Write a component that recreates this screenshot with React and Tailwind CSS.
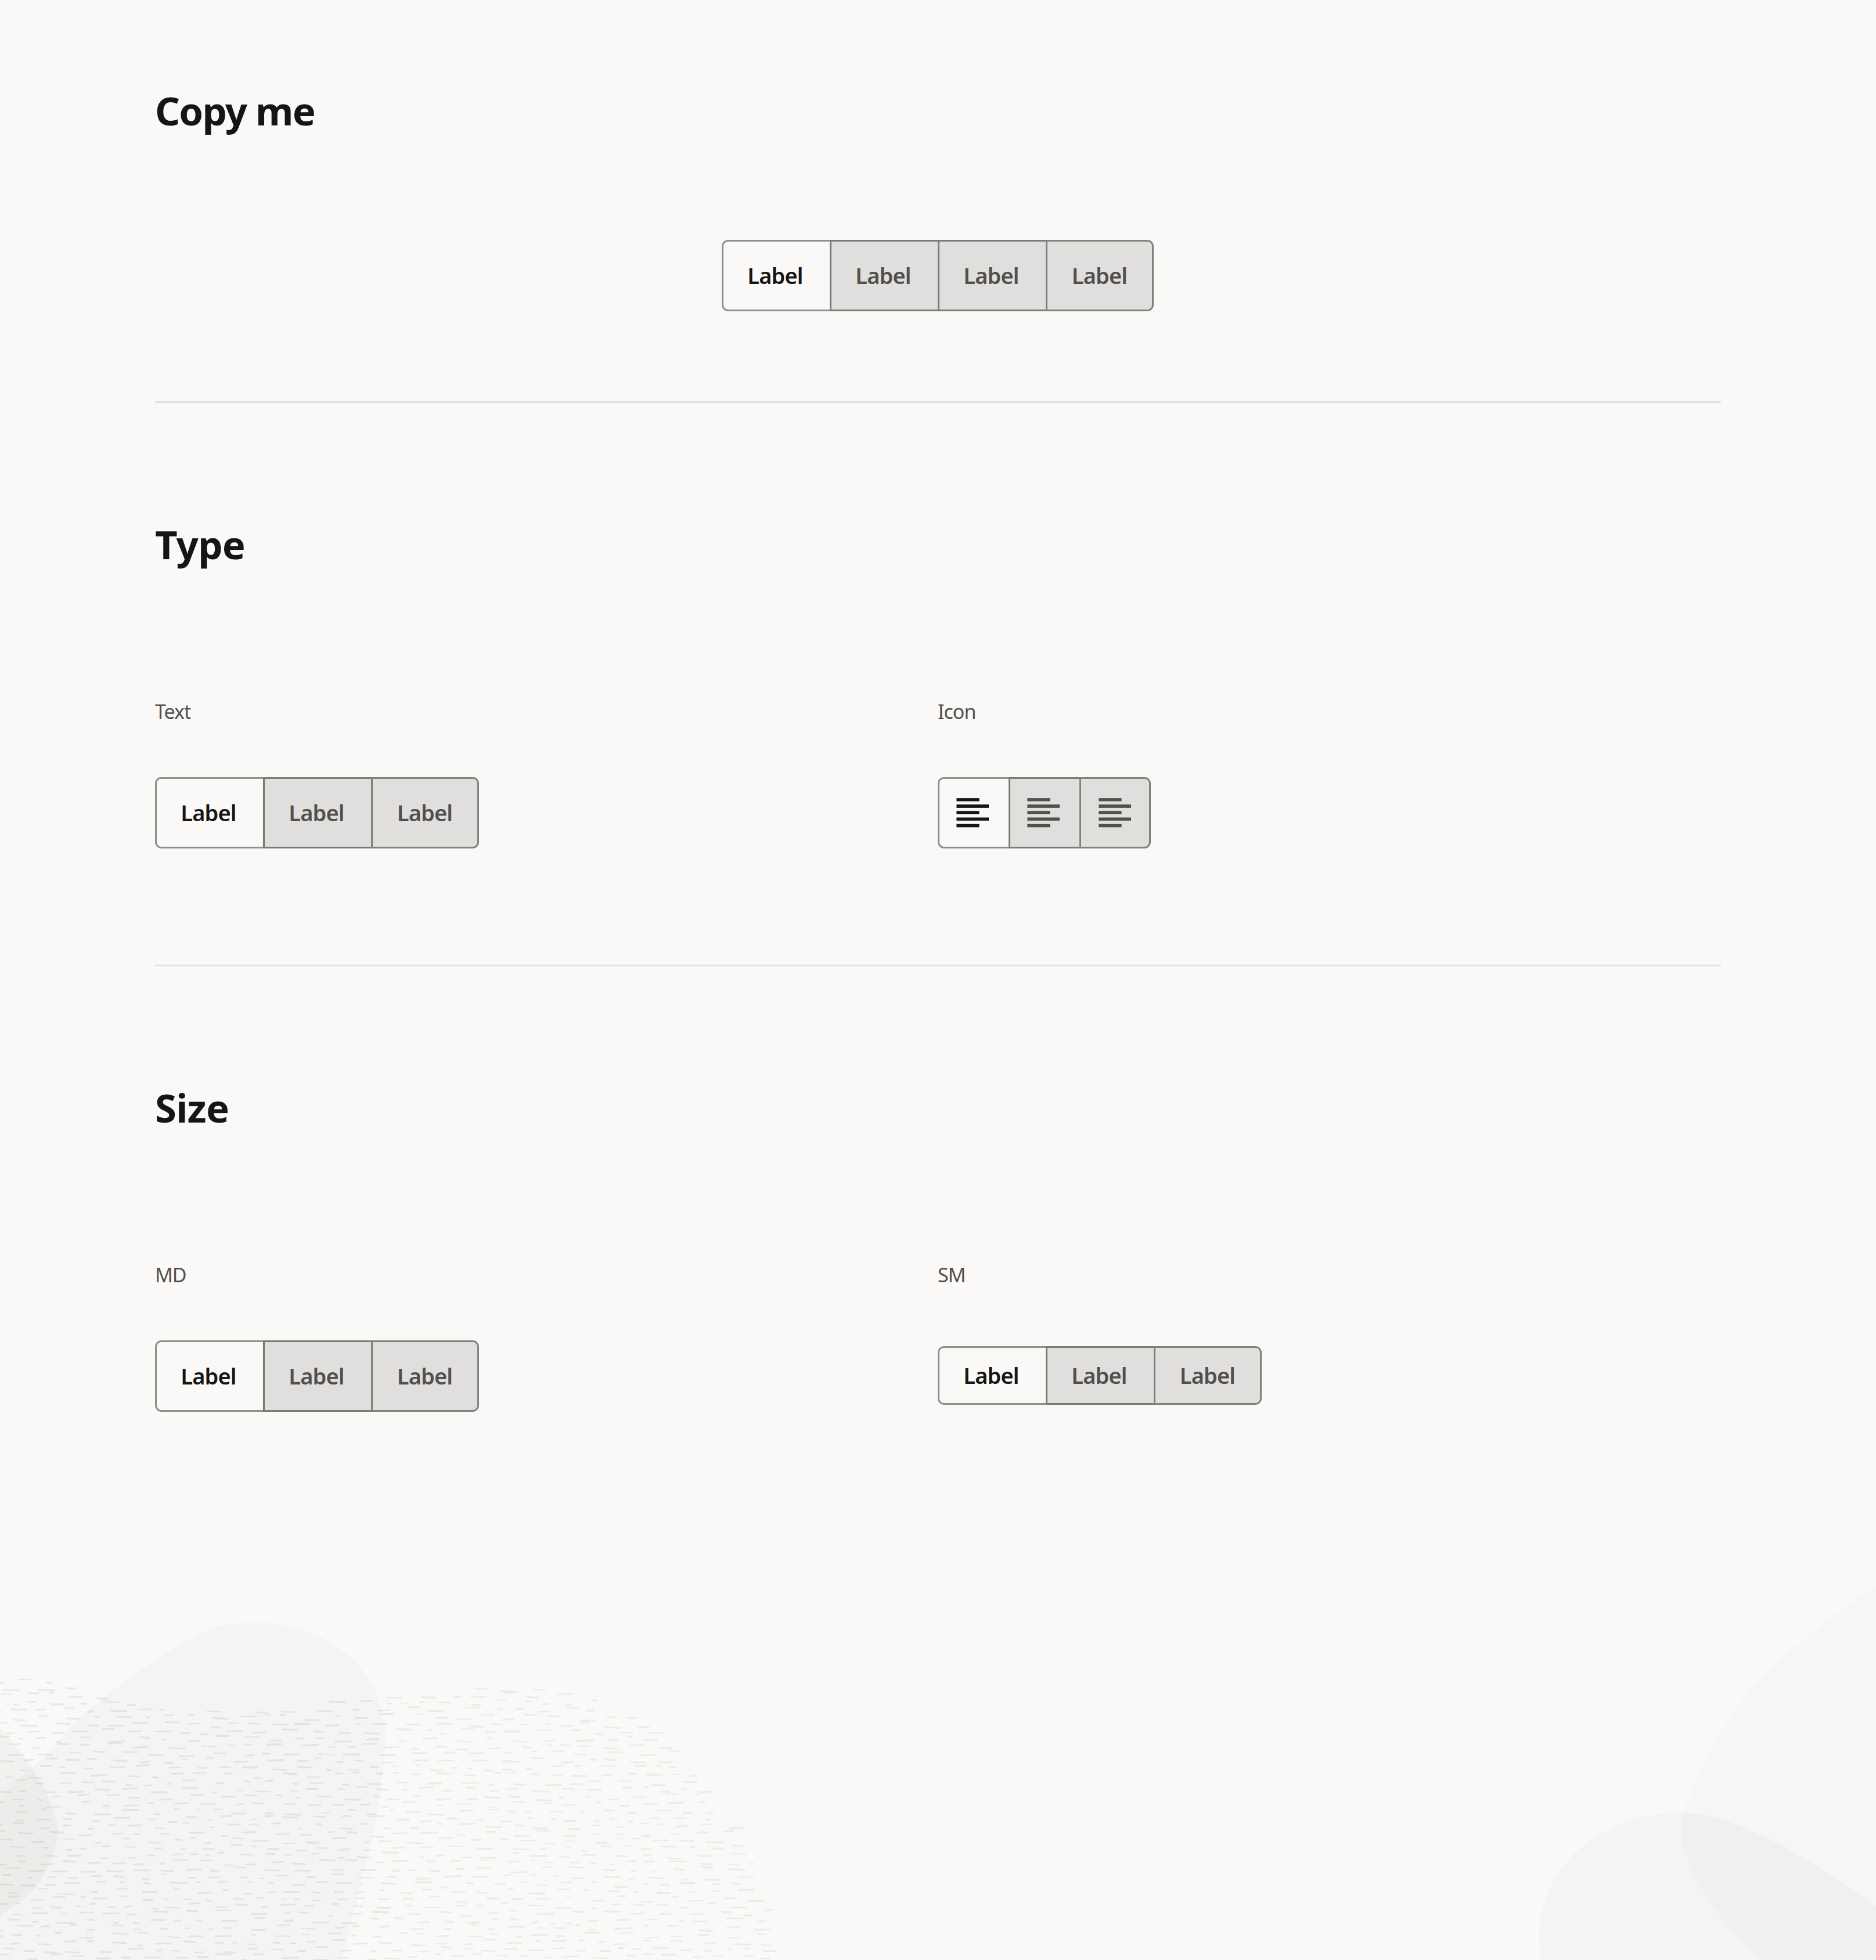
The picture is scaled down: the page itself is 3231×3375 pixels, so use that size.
import clsx from "clsx";

const W = 3231;
const H = 3375;

// closed curve through the given points, with straight runs outside the canvas
function smooth(points, tail) {
  let d = `M${points[0][0]} ${points[0][1]}`;
  for (let i = 0; i < points.length - 1; i++) {
    const p0 = points[i - 1] || points[i];
    const p1 = points[i];
    const p2 = points[i + 1];
    const p3 = points[i + 2] || p2;
    const c1 = [p1[0] + (p2[0] - p0[0]) / 6, p1[1] + (p2[1] - p0[1]) / 6];
    const c2 = [p2[0] - (p3[0] - p1[0]) / 6, p2[1] - (p3[1] - p1[1]) / 6];
    d += `C${c1[0]} ${c1[1]} ${c2[0]} ${c2[1]} ${p2[0]} ${p2[1]}`;
  }
  return `${d}${tail}Z`;
}

const leftPurple = smooth(
  [
    [-10, 3110], [26, 3070], [77, 3023], [128, 2967], [194, 2911], [286, 2846],
    [361, 2806], [433, 2794], [508, 2803], [577, 2833], [628, 2881],
    [656, 2940], [663, 3005], [648, 3130], [612, 3280], [587, 3385],
  ],
  "L-10 3385"
);
const leftGray = smooth(
  [
    [-10, 2965], [31, 3012], [61, 3053], [84, 3096], [98, 3139], [97, 3175],
    [82, 3217], [56, 3255], [26, 3281], [-10, 3305],
  ],
  ""
);
const rightPurple = smooth(
  [
    [2655, 3385], [2651, 3335], [2656, 3288], [2676, 3237], [2717, 3186],
    [2769, 3152], [2821, 3131], [2890, 3121], [2942, 3127], [2994, 3143],
    [3083, 3186], [3163, 3236], [3241, 3290],
  ],
  "L3241 3385"
);
const rightGray = smooth(
  [
    [3241, 2726], [3183, 2764], [3123, 2810], [3063, 2860], [3022, 2900],
    [2986, 2946], [2954, 3001], [2922, 3066], [2902, 3113], [2896, 3149],
    [2900, 3182], [2922, 3237], [2954, 3288], [2994, 3334], [3048, 3385],
  ],
  "L3241 3385"
);

// outline of the dashed hill, from left to right
const ridge = [
  [0, 2884], [76, 2890], [173, 2911], [240, 2935], [326, 2946], [459, 2944],
  [561, 2928], [638, 2920], [740, 2910], [825, 2904], [892, 2904], [986, 2915],
  [1030, 2926], [1093, 2957], [1146, 2992], [1204, 3053], [1236, 3090],
  [1276, 3155], [1307, 3218], [1325, 3291], [1336, 3375],
];

function ridgeAt(x) {
  for (let i = 1; i < ridge.length; i++) {
    const [x1, y1] = ridge[i - 1];
    const [x2, y2] = ridge[i];
    if (x <= x2) return y1 + ((y2 - y1) * (x - x1)) / (x2 - x1);
  }
  return H + 1;
}

function makeDashes() {
  let seed = 7;
  const rand = () => {
    seed = (seed * 16807) % 2147483647;
    return seed / 2147483647;
  };
  const dashes = [];
  for (let y = 2882; y < H + 6; y += 12.5) {
    let x = -30 + rand() * 30;
    while (x < 1340) {
      const len = 6 + rand() * 22;
      const dy = y + (rand() - 0.5) * 10;
      const tilt = (rand() - 0.45) * 2.4;
      if (dy > ridgeAt(Math.max(0, x + len / 2))) {
        dashes.push({
          d: `M${x.toFixed(1)} ${dy.toFixed(1)}q${(len / 2).toFixed(1)} ${(tilt * 0.8).toFixed(1)} ${len.toFixed(1)} ${tilt.toFixed(1)}`,
          w: 2 + rand() * 1.4,
          o: x < 660 ? 0.08 : 0.066,
        });
      }
      x += len + 14 + rand() * 24;
    }
  }
  return dashes;
}

const dashes = makeDashes();

function Backdrop() {
  return (
    <svg
      className="absolute inset-0 pointer-events-none"
      width={W}
      height={H}
      viewBox={`0 0 ${W} ${H}`}
      fill="none"
    >
      <defs>
        <clipPath id="left-blob">
          <path d={leftPurple} />
        </clipPath>
        <clipPath id="right-blob">
          <path d={rightPurple} />
        </clipPath>
      </defs>
      <path d={leftPurple} fill="#f5f3f4" />
      <path d={leftGray} fill="#f2f1ef" />
      <path d={leftGray} fill="#edecea" clipPath="url(#left-blob)" />
      <path d={rightPurple} fill="#f5f3f4" />
      <path d={rightGray} fill="#f7f6f4" />
      <path d={rightGray} fill="#f1f0ef" clipPath="url(#right-blob)" />
      {dashes.map((s, i) => (
        <path
          key={i}
          d={s.d}
          stroke="#2a2a12"
          strokeOpacity={s.o}
          strokeWidth={s.w}
          strokeLinecap="round"
        />
      ))}
    </svg>
  );
}

function AlignIcon() {
  return (
    <svg width="56" height="51" viewBox="0 0 56 51" fill="currentColor">
      <rect x="0.4" y="0.2" width="39.2" height="5.6" />
      <rect x="0.4" y="11.3" width="55.6" height="5.6" />
      <rect x="0.4" y="22.5" width="39.2" height="5.6" />
      <rect x="0.4" y="33.6" width="55.6" height="5.6" />
      <rect x="0.4" y="44.8" width="39.2" height="5.6" />
    </svg>
  );
}

function Segment({ position, icon }) {
  return (
    <button
      className={clsx(
        "flex h-full items-center justify-center text-[38px] font-semibold leading-none tracking-[-0.9px]",
        icon ? "w-[122px] last:w-[123px]" : "w-[186px] pb-0.5",
        position === "first" &&
          "rounded-l-[11px] border-y-[3px] border-l-[3px] border-[#908f8c] pr-[5px] text-[#161513]",
        position === "middle" &&
          "border-y-[3px] border-l-[3px] border-[#7b7a77] bg-[#e1dfdd] pr-[5px] text-[#51504d]",
        position === "last" &&
          "rounded-r-[11px] border-[3px] border-[#82817e] bg-[#e1dfdd] pr-px text-[#51504d]"
      )}
    >
      {icon ? <AlignIcon /> : "Label"}
    </button>
  );
}

function ButtonSet({ count = 3, size = "md", icon = false }) {
  return (
    <div className={clsx("flex", size === "md" ? "h-[123px]" : "h-[101px]")}>
      {Array.from({ length: count }, (_, i) => (
        <Segment
          key={i}
          icon={icon}
          position={i === 0 ? "first" : i === count - 1 ? "last" : "middle"}
        />
      ))}
    </div>
  );
}

function Title({ className = "tracking-[-0.7px]", children }) {
  return (
    <h2
      className={clsx(
        "h-[88px] text-[67px] font-bold leading-[88px] text-[#161513]",
        className
      )}
    >
      {children}
    </h2>
  );
}

function Variant({ name, children }) {
  return (
    <div>
      <p className="mb-[89px] h-12 text-[34px] leading-[48px] tracking-[-1px] text-[#51504d]">
        {name}
      </p>
      {children}
    </div>
  );
}

export default function App() {
  return (
    <div className="relative h-[3375px] w-[3231px] overflow-hidden bg-[#fbf9f8] px-[267px] font-['Noto_Sans',sans-serif]">
      <Backdrop />
      <div className="relative">
        <section className="border-b-[3px] border-[#e2e1df] pt-[146px] pb-[155px]">
          <Title className="tracking-[-1.7px]">Copy me</Title>
          <div className="mt-[179px] flex justify-center pr-px">
            <ButtonSet count={4} />
          </div>
        </section>

        <section className="border-b-[3px] border-[#e2e1df] pt-[199px] pb-[200px]">
          <Title>Type</Title>
          <div className="mt-[220px] grid grid-cols-[1348px_1fr]">
            <Variant name="Text">
              <ButtonSet />
            </Variant>
            <Variant name="Icon">
              <ButtonSet icon />
            </Variant>
          </div>
        </section>

        <section className="pt-[199px]">
          <Title>Size</Title>
          <div className="mt-[220px] grid grid-cols-[1348px_1fr]">
            <Variant name="MD">
              <ButtonSet />
            </Variant>
            <Variant name="SM">
              <div className="pt-2.5">
                <ButtonSet size="sm" />
              </div>
            </Variant>
          </div>
        </section>
      </div>
    </div>
  );
}
